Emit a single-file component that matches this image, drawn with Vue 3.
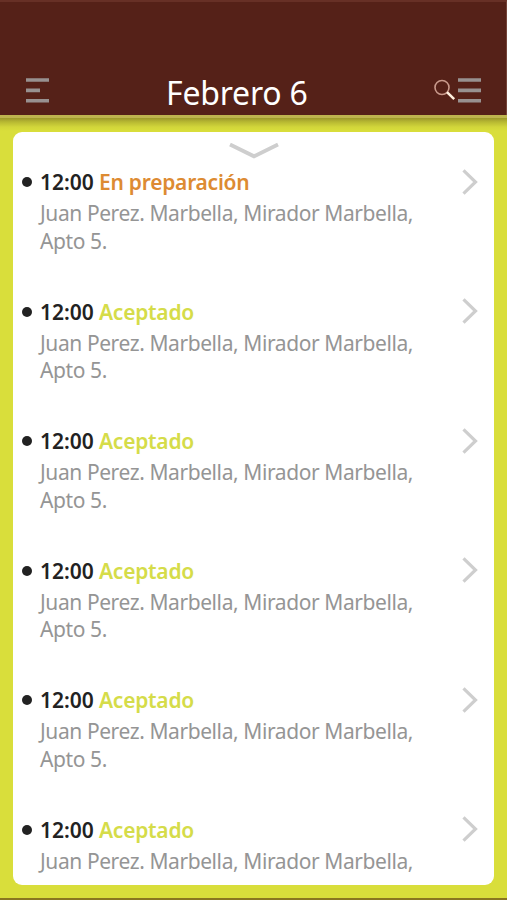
<script setup>
const place = 'Juan Perez. Marbella, Mirador Marbella,'
const orders = [
  { time: '12:00', status: 'En preparación', kind: 'preparing', place, unit: 'Apto 5.' },
  ...Array.from({ length: 4 }, () => ({ time: '12:00', status: 'Aceptado', kind: 'accepted', place, unit: 'Apto 5.' })),
  { time: '12:00', status: 'Aceptado', kind: 'accepted', place, unit: '' },
]
</script>

<template>
  <div class="screen">
    <header class="header">
      <svg class="menu" viewBox="0 0 24 26" aria-hidden="true">
        <path d="M0 2h23M0 12.4h14M0 22.8h23" />
      </svg>
      <h1 class="title">Febrero 6</h1>
      <div class="actions">
        <svg class="search" viewBox="0 0 22 22" aria-hidden="true">
          <circle cx="8" cy="8.5" r="7" />
          <path d="M13 13.2l7.2 7" />
        </svg>
        <svg class="menu" viewBox="0 0 24 26" aria-hidden="true">
          <path d="M0 2h23M0 12.4h23M0 22.8h23" />
        </svg>
      </div>
    </header>
    <main class="body">
      <section class="card">
        <svg class="pull" viewBox="0 0 50 18" aria-hidden="true">
          <path d="M1 2.5L25 14.3L49 2.5" />
        </svg>
        <ul class="list">
          <li v-for="(order, i) in orders" :key="i" class="order">
            <span class="dot"></span>
            <div class="details">
              <div class="heading">
                <span class="time">{{ order.time }}</span>
                <span class="status" :class="order.kind">{{ order.status }}</span>
              </div>
              <p class="address">{{ order.place }}</p>
              <p v-if="order.unit" class="address">{{ order.unit }}</p>
            </div>
            <svg class="chevron" viewBox="0 0 16 26" aria-hidden="true">
              <path d="M1.5 1.3L13.5 13L1.5 24.7" />
            </svg>
          </li>
        </ul>
      </section>
    </main>
  </div>
</template>

<style>
body {
  margin: 0;
}
</style>

<style scoped>
.screen {
  display: flex;
  flex-direction: column;
  box-sizing: border-box;
  width: 507px;
  height: 900px;
  overflow: hidden;
  border-bottom: 2px solid #8a7620;
  background: #d9de3b;
  font-family: 'Noto Sans', 'Open Sans', sans-serif;
}
.header {
  display: grid;
  grid-template-columns: 141px 1fr 80px;
  flex: none;
  box-sizing: border-box;
  height: 115px;
  padding: 76px 24px 0 26px;
  border-top: 2px solid #673026;
  border-right: 1px solid #744439;
  background: #552118;
}
.menu {
  width: 24px;
  height: 26px;
  fill: none;
  stroke: #989190;
  stroke-width: 3.6;
}
.title {
  margin: -3px 0 0 -1px;
  color: #fff;
  font-size: 32px;
  font-weight: 400;
  line-height: 36px;
  letter-spacing: -0.2px;
  white-space: nowrap;
}
.actions {
  display: flex;
  justify-content: flex-end;
  gap: 2px;
}
.search {
  width: 22px;
  height: 22px;
  margin-top: 1px;
  fill: none;
  stroke: #c99a8c;
  stroke-width: 1.6;
}
.search path {
  stroke: #fff0df;
  stroke-width: 2.5;
}
.body {
  display: flex;
  flex: 1;
  min-height: 0;
  padding: 14px 13px 13px;
  border-top: 3px solid #beb54e;
  background: linear-gradient(#9c982b, #b8b932 4px, #d2d63a 9px, #d9de3b 13px);
}
.card {
  flex: 1;
  overflow: hidden;
  border-radius: 9px;
  background: #fff;
}
.pull {
  display: block;
  width: 50px;
  height: 18px;
  margin: 10px auto 0;
  fill: none;
  stroke: #cecece;
  stroke-width: 3.8;
}
.list {
  margin: 7px 0 0;
  padding: 0;
  list-style: none;
}
.order {
  display: flex;
  align-items: flex-start;
  height: 129.5px;
  padding: 0 16px 0 9px;
}
.dot {
  flex: none;
  width: 10px;
  height: 10px;
  margin: 10px 8px 0 0;
  border-radius: 50%;
  background: #222;
}
.details {
  flex: 1;
  white-space: nowrap;
}
.heading {
  display: flex;
  gap: 5px;
  margin-bottom: 3.4px;
  font-size: 21px;
  font-weight: 600;
  line-height: 30px;
}
.time {
  width: 54px;
  color: #222;
}
.status {
  letter-spacing: -0.25px;
}
.preparing {
  color: #dd8b32;
}
.accepted {
  color: #d5dc49;
}
.address {
  margin: 0;
  color: #959595;
  font-size: 21px;
  line-height: 27.5px;
  letter-spacing: -0.41px;
}
.chevron {
  flex: none;
  width: 16px;
  height: 26px;
  margin-top: 1.5px;
  fill: none;
  stroke: #cecece;
  stroke-width: 3.2;
}
</style>
